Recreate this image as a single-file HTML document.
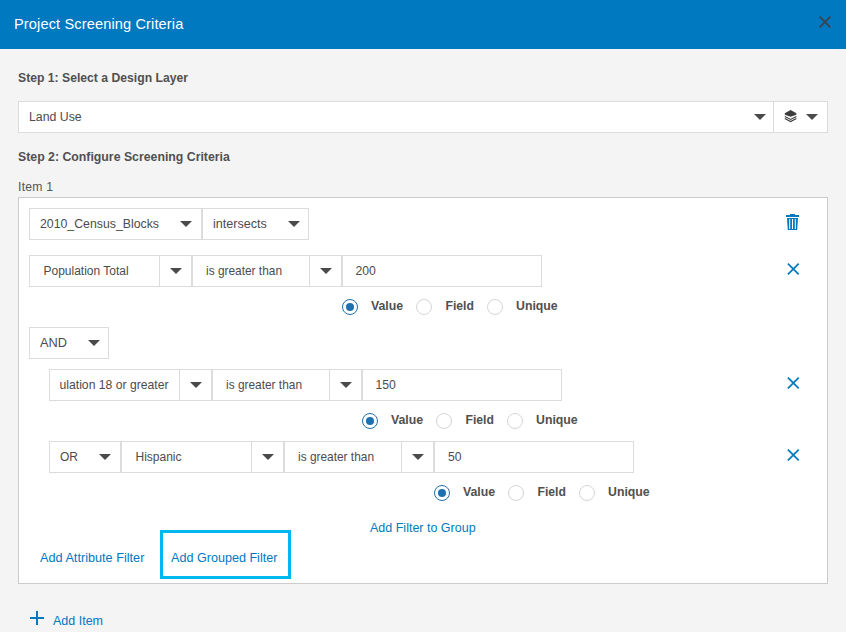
<!DOCTYPE html>
<html><head><meta charset="utf-8">
<style>
*{box-sizing:border-box;margin:0;padding:0}
html,body{width:846px;height:632px;overflow:hidden;background:#f4f4f4;font-family:"Liberation Sans",sans-serif;color:#4c4c4c}
.a{position:absolute}
.t{position:absolute;white-space:pre;font-size:12px;line-height:16px}
.b{font-weight:bold;color:#505050}
.box{position:absolute;background:#fff;border:1px solid #dcdcdc}
.vl{position:absolute;width:1px;background:#dcdcdc}
.arr{position:absolute;width:0;height:0;border-left:6px solid transparent;border-right:6px solid transparent;border-top:6px solid #4a4a4a}
.rad{position:absolute;width:16px;height:16px;border-radius:50%;border:1px solid #d6d6d6;background:#fff}
.rad.on{border:1.5px solid #1f70ae}
.rad.on::after{content:"";position:absolute;left:2.5px;top:2.5px;width:8px;height:8px;border-radius:50%;background:#1f70ae}
.lnk{color:#0079c1}
</style></head><body>
<!-- header -->
<div class="a" style="left:0;top:0;width:846px;height:49px;background:#0079c1"></div>
<div class="t" style="left:14px;top:14px;font-size:14.6px;line-height:20px;color:#fff;letter-spacing:0.12px">Project Screening Criteria</div>
<svg class="a" style="left:817px;top:14px" width="16" height="16" viewBox="0 0 16 16"><path d="M2.6 2.6L13.4 13.4M13.4 2.6L2.6 13.4" stroke="#3a4350" stroke-width="1.9"/></svg>

<!-- step 1 -->
<div class="t b" style="left:18px;top:70px;font-size:12.2px">Step 1: Select a Design Layer</div>
<div class="box" style="left:18px;top:101px;width:810px;height:32px"></div>
<div class="vl" style="left:773px;top:101px;height:32px"></div>
<div class="t" style="left:29px;top:109px;font-size:12.3px">Land Use</div>
<div class="arr" style="left:753.5px;top:114px"></div>
<svg class="a" style="left:783px;top:109px" width="15" height="14" viewBox="0 0 15 14"><path d="M7.6 1.1L13.4 4.3L13.4 5.8L7.6 7.8L1.8 5.8L1.8 4.3Z" fill="#3c3c3c"/><path d="M1.8 7.4L7.6 10.4L13.4 7.4" fill="none" stroke="#3c3c3c" stroke-width="1.15"/><path d="M1.8 9.6L7.6 12.6L13.4 9.6" fill="none" stroke="#3c3c3c" stroke-width="1.15"/></svg>
<div class="arr" style="left:806px;top:114px"></div>

<!-- step 2 -->
<div class="t b" style="left:18px;top:149px;font-size:12.3px">Step 2: Configure Screening Criteria</div>
<div class="t" style="left:18px;top:179px;font-size:12.2px;letter-spacing:0.25px;color:#555">Item 1</div>

<!-- criteria box -->
<div class="a" style="left:18px;top:197px;width:810px;height:387px;background:#fff;border:1px solid #cbcbcb"></div>

<!-- row 1 -->
<div class="box" style="left:29px;top:208px;width:173px;height:32px"></div>
<div class="box" style="left:202px;top:208px;width:107px;height:32px"></div>
<div class="t" style="left:40px;top:216px;font-size:12.3px">2010_Census_Blocks</div>
<div class="arr" style="left:180px;top:221px"></div>
<div class="t" style="left:213px;top:216px;font-size:12.6px">intersects</div>
<div class="arr" style="left:287.5px;top:221px"></div>
<svg class="a" style="left:785px;top:213px" width="15" height="18" viewBox="0 0 15 18"><path d="M5 1h5v1.5H5z" fill="#0079c1"/><rect x="1" y="2" width="13" height="2" fill="#0079c1"/><path d="M2 5h11l-0.8 12H2.8z" fill="#0079c1"/><rect x="4.2" y="6" width="1" height="10" fill="#fff"/><rect x="7" y="6" width="1" height="10" fill="#fff"/><rect x="9.8" y="6" width="1" height="10" fill="#fff"/></svg>

<!-- row 2 -->
<div class="box" style="left:29px;top:255px;width:163px;height:32px"></div>
<div class="vl" style="left:159px;top:255px;height:32px"></div>
<div class="box" style="left:192px;top:255px;width:150px;height:32px"></div>
<div class="vl" style="left:309px;top:255px;height:32px"></div>
<div class="box" style="left:342px;top:255px;width:200px;height:32px"></div>
<div class="t" style="left:43.5px;top:263px;font-size:12px">Population Total</div>
<div class="arr" style="left:169.5px;top:268px"></div>
<div class="t" style="left:206px;top:263px;font-size:11.9px">is greater than</div>
<div class="arr" style="left:319.5px;top:268px"></div>
<div class="t" style="left:355.5px;top:263px;font-size:12.2px">200</div>
<svg class="a" style="left:785px;top:261px" width="16" height="16" viewBox="0 0 16 16"><path d="M2.9 2.6L13.7 13.4M13.7 2.6L2.9 13.4" stroke="#0079c1" stroke-width="1.75"/></svg>
<div class="rad on" style="left:342px;top:299px"></div>
<div class="t b" style="left:371px;top:298px;font-size:12.3px">Value</div>
<div class="rad" style="left:416px;top:299px"></div>
<div class="t b" style="left:445.5px;top:298px;font-size:12.2px">Field</div>
<div class="rad" style="left:487px;top:299px"></div>
<div class="t b" style="left:516px;top:298px;font-size:12.3px">Unique</div>

<!-- AND -->
<div class="box" style="left:29px;top:327px;width:80px;height:32px"></div>
<div class="t" style="left:40px;top:335px;font-size:12.8px">AND</div>
<div class="arr" style="left:88px;top:340px"></div>

<!-- group row 1 -->
<div class="box" style="left:49px;top:369px;width:163px;height:32px"></div>
<div class="vl" style="left:179px;top:369px;height:32px"></div>
<div class="box" style="left:212px;top:369px;width:150px;height:32px"></div>
<div class="vl" style="left:329px;top:369px;height:32px"></div>
<div class="box" style="left:362px;top:369px;width:200px;height:32px"></div>
<div class="t" style="left:59.5px;top:377px;font-size:12.2px">ulation 18 or greater</div>
<div class="arr" style="left:189.5px;top:382px"></div>
<div class="t" style="left:226px;top:377px;font-size:11.9px">is greater than</div>
<div class="arr" style="left:339.5px;top:382px"></div>
<div class="t" style="left:375.5px;top:377px;font-size:12.2px">150</div>
<svg class="a" style="left:785px;top:375px" width="16" height="16" viewBox="0 0 16 16"><path d="M2.9 2.6L13.7 13.4M13.7 2.6L2.9 13.4" stroke="#0079c1" stroke-width="1.75"/></svg>
<div class="rad on" style="left:362px;top:413px"></div>
<div class="t b" style="left:391px;top:412px;font-size:12.3px">Value</div>
<div class="rad" style="left:436px;top:413px"></div>
<div class="t b" style="left:465.5px;top:412px;font-size:12.2px">Field</div>
<div class="rad" style="left:507px;top:413px"></div>
<div class="t b" style="left:536px;top:412px;font-size:12.3px">Unique</div>

<!-- group row 2 -->
<div class="box" style="left:49px;top:441px;width:72px;height:32px"></div>
<div class="t" style="left:60px;top:449px;font-size:12px">OR</div>
<div class="arr" style="left:99px;top:454px"></div>
<div class="box" style="left:121px;top:441px;width:163px;height:32px"></div>
<div class="vl" style="left:251px;top:441px;height:32px"></div>
<div class="box" style="left:284px;top:441px;width:150px;height:32px"></div>
<div class="vl" style="left:401px;top:441px;height:32px"></div>
<div class="box" style="left:434px;top:441px;width:200px;height:32px"></div>
<div class="t" style="left:135.5px;top:449px;font-size:12px">Hispanic</div>
<div class="arr" style="left:261.5px;top:454px"></div>
<div class="t" style="left:298px;top:449px;font-size:11.9px">is greater than</div>
<div class="arr" style="left:411.5px;top:454px"></div>
<div class="t" style="left:448px;top:449px;font-size:12.2px">50</div>
<svg class="a" style="left:785px;top:447px" width="16" height="16" viewBox="0 0 16 16"><path d="M2.9 2.6L13.7 13.4M13.7 2.6L2.9 13.4" stroke="#0079c1" stroke-width="1.75"/></svg>
<div class="rad on" style="left:434px;top:485px"></div>
<div class="t b" style="left:463px;top:484px;font-size:12.3px">Value</div>
<div class="rad" style="left:508px;top:485px"></div>
<div class="t b" style="left:537.5px;top:484px;font-size:12.2px">Field</div>
<div class="rad" style="left:579px;top:485px"></div>
<div class="t b" style="left:608px;top:484px;font-size:12.3px">Unique</div>

<!-- links -->
<div class="t lnk" style="left:370px;top:520px;font-size:12.5px">Add Filter to Group</div>
<div class="t lnk" style="left:40px;top:550px;font-size:12.7px">Add Attribute Filter</div>
<div class="a" style="left:160px;top:530px;width:131px;height:49px;border:3px solid #00b7f0"></div>
<div class="t lnk" style="left:171px;top:550px;font-size:12.6px">Add Grouped Filter</div>

<!-- add item -->
<svg class="a" style="left:29px;top:610px" width="16" height="16" viewBox="0 0 16 16"><path d="M8 1V15M1 8H15" stroke="#0079c1" stroke-width="2"/></svg>
<div class="t lnk" style="left:53px;top:613px;font-size:12.5px">Add Item</div>
</body></html>
